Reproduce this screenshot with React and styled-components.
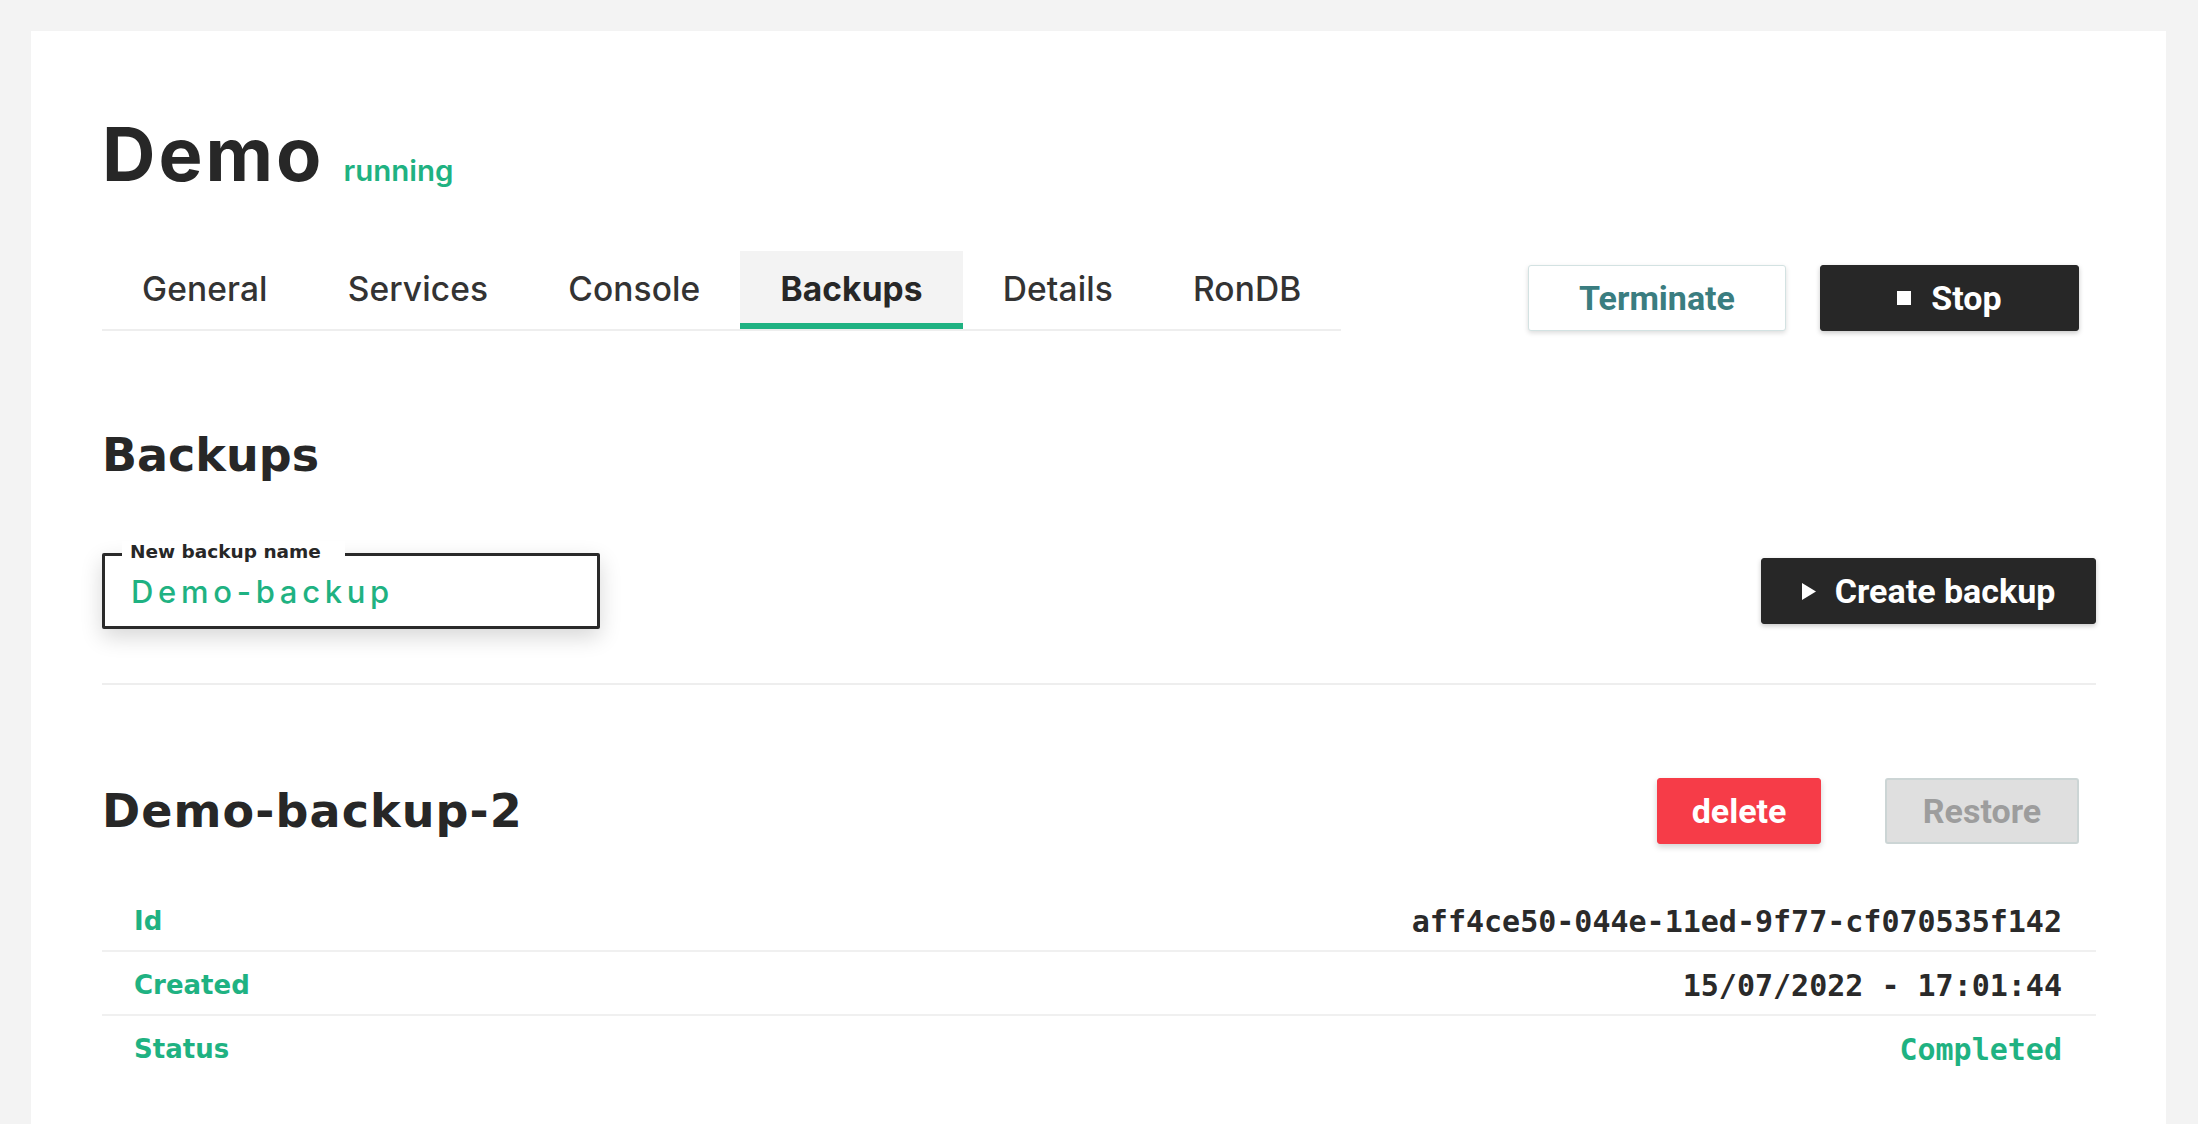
import React from "react";
import styled, { createGlobalStyle, css } from "styled-components";

const GREEN = "#1fb282";
const DARK = "#272727";

const Global = createGlobalStyle`
  html, body { margin: 0; padding: 0; background: #f3f3f3; }
  body { font-family: Inter, "Noto Sans", sans-serif; color: ${DARK}; }
  * { box-sizing: border-box; }
`;

const Card = styled.main`
  margin: 31px 32px 0 31px;
  background: #ffffff;
  padding: 88px 70px 90px 71px;
`;

const TitleRow = styled.div`
  display: flex;
  align-items: baseline;
  gap: 19px;
`;

const Title = styled.h1`
  margin: 0;
  font-family: Inter, sans-serif;
  font-weight: 700;
  font-size: 74px;
  line-height: 70px;
  letter-spacing: 3px;
  color: ${DARK};
`;

const Status = styled.span`
  font-family: Inter, sans-serif;
  font-weight: 600;
  font-size: 29.5px;
  color: ${GREEN};
`;

const NavRow = styled.div`
  margin-top: 62px;
  display: flex;
  justify-content: space-between;
  align-items: flex-end;
`;

const Tabs = styled.nav`
  display: flex;
  border-bottom: 2px solid #eeeeee;
`;

const Tab = styled.div`
  height: 78px;
  padding: 3px 40px 0;
  display: flex;
  align-items: center;
  font-family: Inter, sans-serif;
  font-size: 33.5px;
  letter-spacing: 0.12px;
  font-weight: 500;
  color: #333333;
  border-bottom: 6px solid transparent;
  ${(p) =>
    p.$active &&
    css`
      background: #f3f3f3;
      font-weight: 700;
      color: ${DARK};
      border-bottom-color: ${GREEN};
    `}
`;

const Actions = styled.div`
  display: flex;
  align-items: center;
  gap: ${(p) => p.$gap}px;
  margin-right: 17px;
`;

const variants = {
  outline: css`
    background: #ffffff;
    color: #3a7d80;
    border: 1px solid #d3e2e2;
    box-shadow: 0 2px 5px rgba(0, 0, 0, 0.14);
  `,
  dark: css`
    background: ${DARK};
    color: #ffffff;
    border: 1px solid ${DARK};
    box-shadow: 0 2px 5px rgba(0, 0, 0, 0.22);
  `,
  danger: css`
    background: #f63c48;
    color: #ffffff;
    border: 1px solid #f63c48;
    box-shadow: 0 3px 6px rgba(0, 0, 0, 0.18);
  `,
  disabled: css`
    background: #dfdfdf;
    color: #9d9d9d;
    border: 2px solid #ccd5d5;
  `,
};

const Button = styled.button`
  width: ${(p) => p.$w}px;
  height: 66px;
  display: flex;
  align-items: center;
  justify-content: center;
  gap: ${(p) => (p.$iconGap ? p.$iconGap : 0)}px;
  border-radius: 3px;
  font-family: Roboto, "Liberation Sans", sans-serif;
  font-weight: 700;
  font-size: 34px;
  padding: 0;
  cursor: pointer;
  ${(p) => variants[p.$variant]}
`;

const StopIcon = styled.span`
  width: 14px;
  height: 14px;
  background: #ffffff;
  display: inline-block;
`;

const PlayIcon = () => (
  <svg width="14" height="17" viewBox="0 0 14 17" aria-hidden="true">
    <polygon points="0,0 14,8.5 0,17" fill="#ffffff" />
  </svg>
);

const SectionTitle = styled.h2`
  margin: ${(p) => (p.$top ? p.$top : 0)}px 0 0 0;
  font-family: "DejaVu Sans", sans-serif;
  font-weight: 700;
  font-size: 46px;
  line-height: 55px;
  letter-spacing: ${(p) => (p.$ls ? p.$ls : 0)}px;
  color: ${DARK};
`;

const CreateRow = styled.div`
  margin-top: 70px;
  display: flex;
  justify-content: space-between;
  align-items: center;
`;

const Field = styled.div`
  position: relative;
  width: 498px;
  height: 76px;
  border: 3px solid #2a2a2a;
  border-radius: 2px;
  background: #ffffff;
  box-shadow: 0 8px 22px rgba(0, 0, 0, 0.16);
`;

const FieldLabel = styled.label`
  position: absolute;
  top: -15px;
  left: 17px;
  padding: 0 24px 0 8px;
  background: #ffffff;
  font-family: "DejaVu Sans", sans-serif;
  font-weight: 700;
  font-size: 18.5px;
  line-height: 22px;
  color: ${DARK};
`;

const FieldInput = styled.input`
  width: 100%;
  height: 100%;
  border: none;
  outline: none;
  background: transparent;
  padding: 0 26px;
  font-family: Inter, sans-serif;
  font-size: 31px;
  font-weight: 500;
  letter-spacing: 4.7px;
  color: ${GREEN};
`;

const Divider = styled.hr`
  margin: 54px 0 0 0;
  border: none;
  height: 2px;
  background: #eeeeee;
`;

const BackupHeader = styled.div`
  margin-top: 93px;
  display: flex;
  justify-content: space-between;
  align-items: center;
`;

const InfoTable = styled.dl`
  margin: 44px 0 0 0;
`;

const InfoRow = styled.div`
  height: 64px;
  display: flex;
  justify-content: space-between;
  align-items: center;
  padding: 4px 34px 0 32px;
  border-bottom: 2px solid ${(p) => (p.$last ? "transparent" : "#f0f0f0")};
`;

const InfoLabel = styled.dt`
  font-family: "DejaVu Sans", sans-serif;
  font-weight: 700;
  font-size: 26px;
  color: ${GREEN};
`;

const InfoValue = styled.dd`
  margin: 0;
  font-family: "DejaVu Sans Mono", "Liberation Mono", monospace;
  font-weight: 700;
  font-size: 30px;
  color: ${(p) => (p.$accent ? GREEN : "#2a2a2a")};
`;

const tabs = ["General", "Services", "Console", "Backups", "Details", "RonDB"];

const info = [
  { label: "Id", value: "aff4ce50-044e-11ed-9f77-cf070535f142" },
  { label: "Created", value: "15/07/2022 - 17:01:44" },
  { label: "Status", value: "Completed", accent: true },
];

export default function App() {
  return (
    <>
      <Global />
      <Card>
        <TitleRow>
          <Title>Demo</Title>
          <Status>running</Status>
        </TitleRow>

        <NavRow>
          <Tabs>
            {tabs.map((t) => (
              <Tab key={t} $active={t === "Backups"}>
                {t}
              </Tab>
            ))}
          </Tabs>
          <Actions $gap={34}>
            <Button $variant="outline" $w={258}>
              Terminate
            </Button>
            <Button $variant="dark" $w={259} $iconGap={20}>
              <StopIcon />
              Stop
            </Button>
          </Actions>
        </NavRow>

        <SectionTitle $top={97}>Backups</SectionTitle>

        <CreateRow>
          <Field>
            <FieldLabel>New backup name</FieldLabel>
            <FieldInput defaultValue="Demo-backup" />
          </Field>
          <Button $variant="dark" $w={335} $iconGap={19}>
            <PlayIcon />
            Create backup
          </Button>
        </CreateRow>

        <Divider />

        <BackupHeader>
          <SectionTitle as="h3" $ls={1.1}>
            Demo-backup-2
          </SectionTitle>
          <Actions $gap={64}>
            <Button $variant="danger" $w={164}>
              delete
            </Button>
            <Button $variant="disabled" $w={194}>
              Restore
            </Button>
          </Actions>
        </BackupHeader>

        <InfoTable>
          {info.map((r, i) => (
            <InfoRow key={r.label} $last={i === info.length - 1}>
              <InfoLabel>{r.label}</InfoLabel>
              <InfoValue $accent={r.accent}>{r.value}</InfoValue>
            </InfoRow>
          ))}
        </InfoTable>
      </Card>
    </>
  );
}
